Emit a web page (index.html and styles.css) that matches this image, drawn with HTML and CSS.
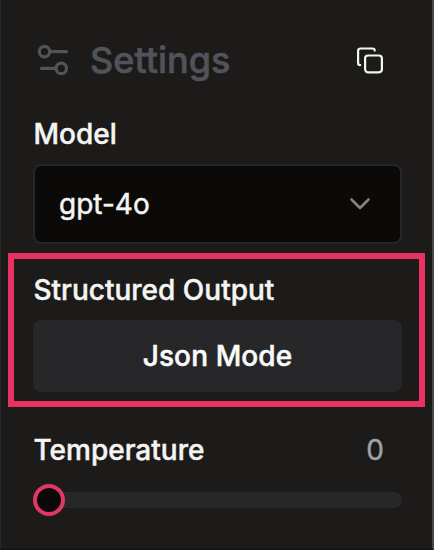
FILE: index.html
```html
<!DOCTYPE html>
<html lang="en">
<head>
<meta charset="utf-8">
<title>Settings</title>
<link rel="stylesheet" href="styles.css">
</head>
<body>
<aside class="panel">
  <header class="header">
    <svg class="sliders" viewBox="0 0 32 32"><circle cx="7.5" cy="7.6" r="5.2"/><path d="M12.7 7.6H29.5M4.5 24.4H19.1"/><circle cx="24.3" cy="24.4" r="5.2"/></svg>
    <h1 class="title">Settings</h1>
    <svg class="copy" viewBox="0 0 28 28"><rect x="9.1" y="9.5" width="16.8" height="16.8" rx="3"/><path d="M4.2 19.1C2.9 19.1 2.1 18.3 2.1 16.9V4.9C2.1 3.4 3 2.5 4.5 2.5H16.5C17.9 2.5 18.7 3.3 18.7 4.6"/></svg>
  </header>
  <label class="label">Model</label>
  <div class="select">
    <span class="model">gpt-4o</span>
    <svg class="chevron" viewBox="0 0 22 14"><path d="M2.5 2.5L11 11L19.5 2.5"/></svg>
  </div>
  <section class="highlight">
    <label class="label">Structured Output</label>
    <button class="button">Json Mode</button>
  </section>
  <div class="row">
    <label class="label">Temperature</label>
    <span class="value">0</span>
  </div>
  <div class="slider"><div class="track"></div><div class="thumb"></div></div>
</aside>
</body>
</html>
```
FILE: styles.css
```css
* { box-sizing: border-box; }
body { margin: 0; background: #1c1b19; }
.panel {
  height: 550px;
  padding: 40px 30px 0 32px;
  border-left: 1px solid #27272a;
  border-right: 2px solid #4a4945;
  border-bottom: 2px solid #17131a;
  background: #1c1b19;
  color: #f4f4f3;
  font: 500 28px/40px Inter, sans-serif;
}
.header { display: flex; align-items: center; height: 40px; }
svg { fill: none; stroke-linecap: round; stroke-linejoin: round; }
.sliders { width: 32px; height: 32px; margin-left: 4px; stroke: #52525b; stroke-width: 3.2; }
.title { margin: 0 0 0 21px; font-size: 36px; font-weight: 500; line-height: 40px; color: #52525b; -webkit-text-stroke: 0.6px; }
.copy { width: 28px; height: 28px; margin-left: auto; margin-right: 18px; stroke: #f4f4f3; stroke-width: 2.2; }
.label { display: block; padding-left: 0.5px; -webkit-text-stroke: 0.45px; }
.panel > .label { margin-top: 34px; }
.select {
  display: flex;
  align-items: center;
  justify-content: space-between;
  height: 80px;
  margin-top: 10px;
  padding: 0 29px 0 24px;
  border: 2px solid #27272a;
  border-radius: 8px;
  background: #0c0a09;
}
.model { font-weight: 400; -webkit-text-stroke: 0.5px; }
.chevron { width: 22px; height: 14px; stroke: #858483; stroke-width: 2.6; }
.highlight {
  height: 154px;
  margin: 9px -23px 0 -25px;
  padding: 11px 17px 0 19px;
  border: 6px solid #e93264;
}
.button {
  display: block;
  width: 100%;
  height: 72px;
  margin-top: 10px;
  padding: 0;
  border: 0;
  border-radius: 8px;
  background: #27272a;
  color: #fafafa;
  font: 500 28px/40px Inter, sans-serif;
  letter-spacing: 0.1px;
  -webkit-text-stroke: 0.5px;
}
.row { display: flex; justify-content: space-between; margin-top: 23px; padding-right: 18px; }
.value { font-weight: 400; color: #a1a1aa; -webkit-text-stroke: 0.4px; }
.slider { position: relative; display: flex; align-items: center; height: 32px; margin-top: 14px; }
.track { flex: 1; height: 16px; border-radius: 8px; background: #27272a; }
.thumb {
  position: absolute;
  left: 0;
  width: 32px;
  height: 32px;
  border: 4px solid #e13863;
  border-radius: 50%;
  background: #0c0a09;
}
```
